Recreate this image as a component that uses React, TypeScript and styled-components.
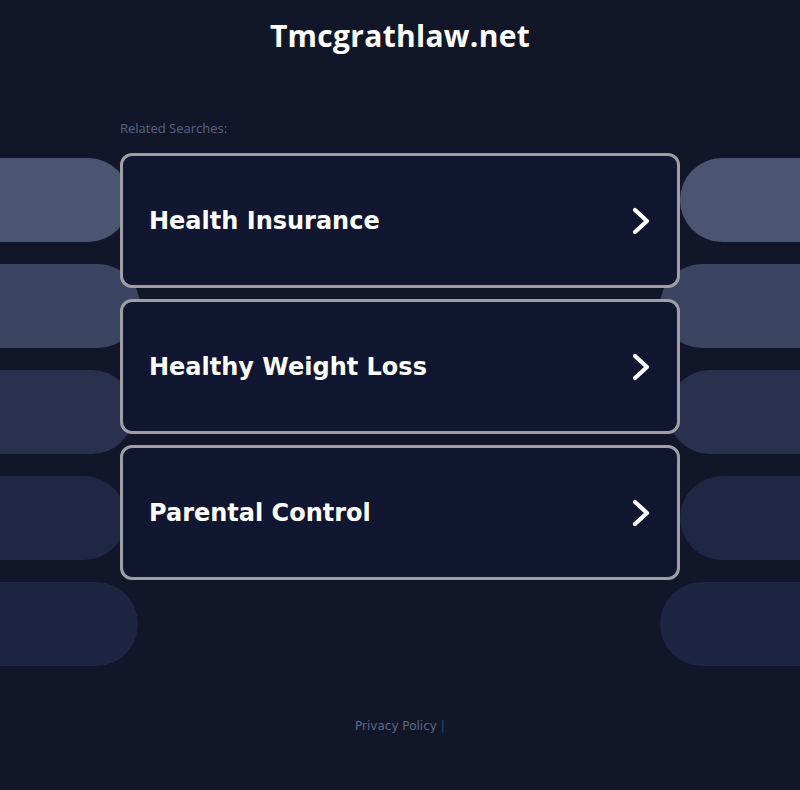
import styled, { createGlobalStyle } from "styled-components";

const GlobalStyle = createGlobalStyle`
  html, body {
    margin: 0;
    padding: 0;
    background: #111729;
    overflow-x: hidden;
  }
  body {
    font-family: "DejaVu Sans", sans-serif;
  }
`;

const Page = styled.div`
  min-height: 790px;
  display: flex;
  flex-direction: column;
  align-items: stretch;
`;

const Title = styled.h1`
  margin: 0;
  padding-top: 16px;
  text-align: center;
  font-family: "Open Sans", sans-serif;
  font-weight: 700;
  font-size: 30px;
  line-height: 40px;
  color: #ffffff;
  letter-spacing: 0.3px;
`;

const Label = styled.div`
  width: 560px;
  margin: 64px auto 0;
  font-family: "Open Sans", sans-serif;
  font-size: 13px;
  line-height: 16px;
  color: #5a6383;
`;

const Row = styled.div`
  display: flex;
  margin-top: 17px;
`;

const Side = styled.div<{ $right?: boolean }>`
  flex: 1;
  display: flex;
  flex-direction: column;
  align-items: ${(p) => (p.$right ? "flex-start" : "flex-end")};
  gap: 22px;
  padding-top: 5px;
  min-width: 0;
`;

const Pill = styled.div<{ $shade: string; $reach: number; $right?: boolean }>`
  height: 84px;
  width: ${(p) => 140 + p.$reach}px;
  flex-shrink: 0;
  background: ${(p) => p.$shade};
  border-radius: ${(p) => (p.$right ? "42px 0 0 42px" : "0 42px 42px 0")};
  ${(p) =>
    p.$right ? `margin-left: -${p.$reach}px;` : `margin-right: -${p.$reach}px;`}
`;

const Cards = styled.div`
  width: 560px;
  display: flex;
  flex-direction: column;
  gap: 11px;
  position: relative;
  z-index: 1;
`;

const Card = styled.a`
  box-sizing: border-box;
  height: 135px;
  display: flex;
  align-items: center;
  justify-content: space-between;
  padding: 0 26px 0 26px;
  background: #111730;
  border: 3px solid #9d9fa4;
  border-radius: 12px;
  color: #ffffff;
  text-decoration: none;
  font-weight: 700;
  font-size: 24px;
  cursor: pointer;
`;

const Footer = styled.div`
  margin-top: 52px;
  text-align: center;
  font-size: 12px;
  line-height: 16px;
  color: #5e6784;
`;

const Divider = styled.span`
  color: #3b4260;
  margin-left: 4px;
`;

function Chevron() {
  return (
    <svg width="20" height="30" viewBox="0 0 20 30">
      <polyline
        points="4,4 16,15 4,26"
        fill="none"
        stroke="#ffffff"
        strokeWidth="4.2"
        strokeLinecap="round"
        strokeLinejoin="round"
      />
    </svg>
  );
}

const leftPills = [
  { shade: "#4b5470", reach: 10 },
  { shade: "#3b4461", reach: 20 },
  { shade: "#29314f", reach: 14 },
  { shade: "#1f2745", reach: 6 },
  { shade: "#1d2543", reach: 18 },
];

const rightPills = [
  { shade: "#4b5470", reach: 0 },
  { shade: "#3b4461", reach: 20 },
  { shade: "#29314f", reach: 12 },
  { shade: "#1f2745", reach: 0 },
  { shade: "#1d2543", reach: 20 },
];

const searches = ["Health Insurance", "Healthy Weight Loss", "Parental Control"];

export default function App() {
  return (
    <>
      <GlobalStyle />
      <Page>
        <Title>Tmcgrathlaw.net</Title>
        <Label>Related Searches:</Label>
        <Row>
          <Side>
            {leftPills.map((p, i) => (
              <Pill key={i} $shade={p.shade} $reach={p.reach} />
            ))}
          </Side>
          <Cards>
            {searches.map((s) => (
              <Card key={s}>
                <span>{s}</span>
                <Chevron />
              </Card>
            ))}
          </Cards>
          <Side $right>
            {rightPills.map((p, i) => (
              <Pill key={i} $shade={p.shade} $reach={p.reach} $right />
            ))}
          </Side>
        </Row>
        <Footer>
          Privacy Policy<Divider>|</Divider>
        </Footer>
      </Page>
    </>
  );
}
